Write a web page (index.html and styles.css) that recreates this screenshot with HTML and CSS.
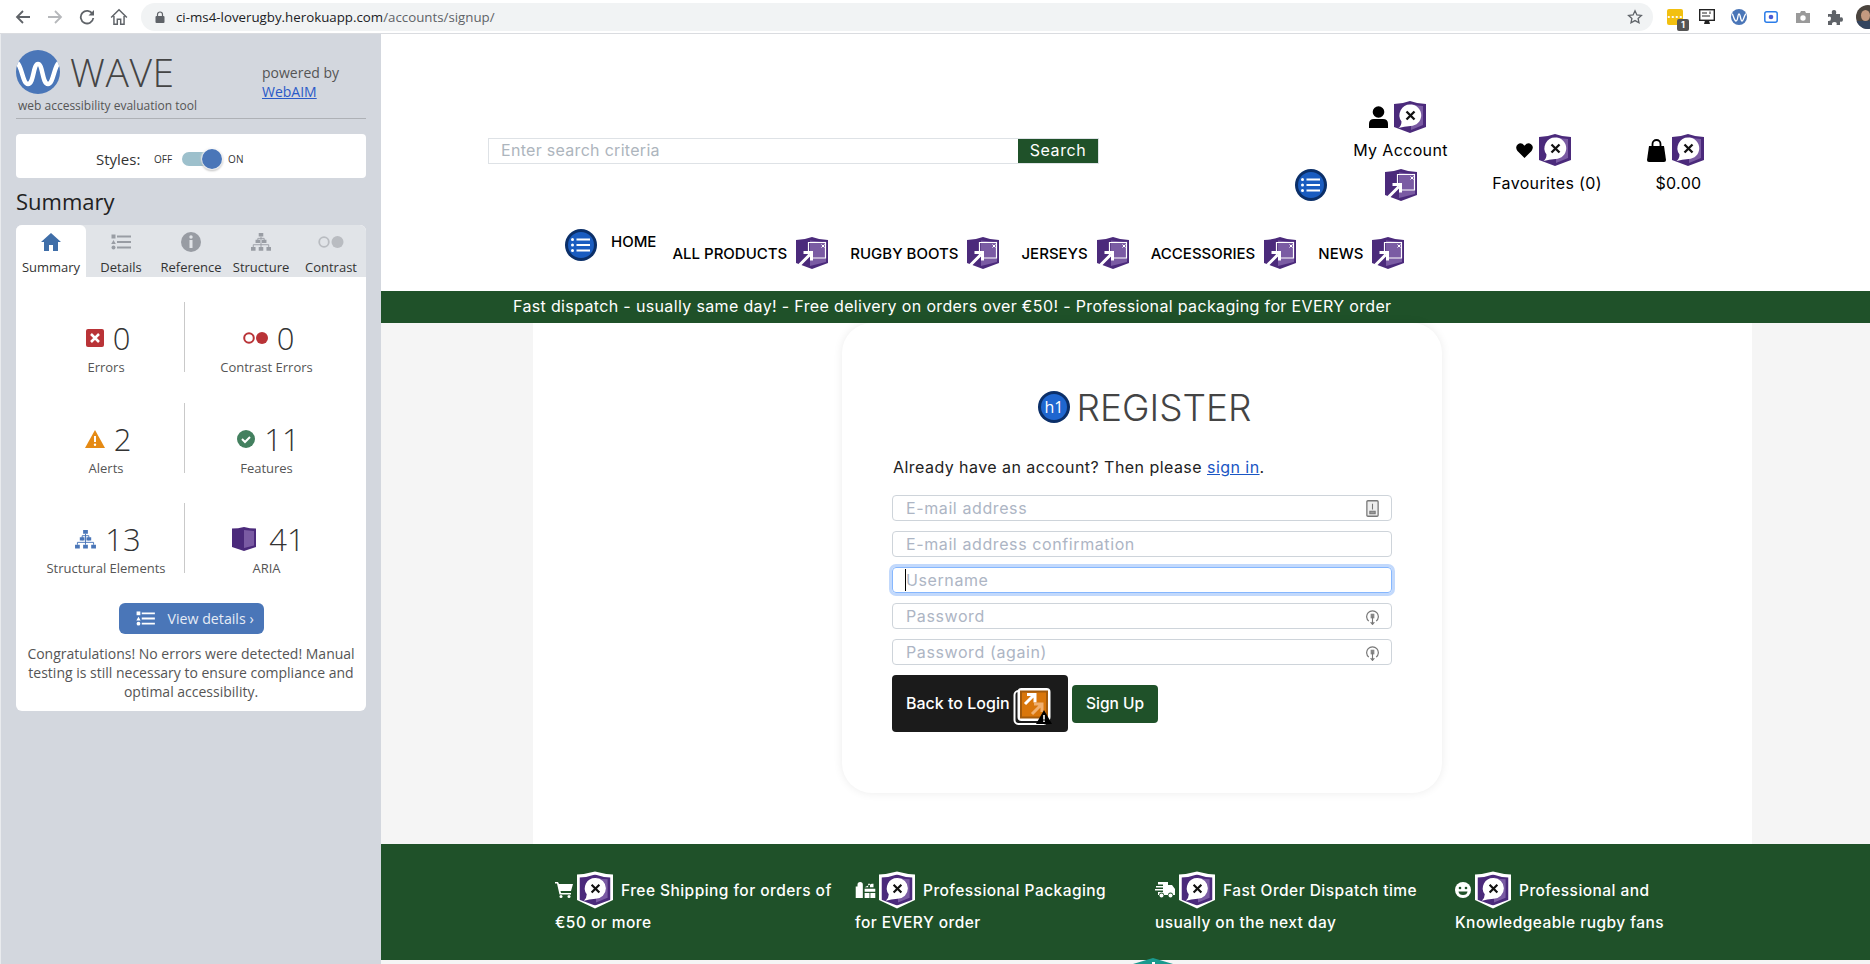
FILE: index.html
```html
<!DOCTYPE html>
<html>
	<head>
		<meta charset="utf-8"/>
		<title>Register - WAVE</title>
		<link rel="stylesheet" href="styles.css">
	</head>
	<body>
		<svg class="defs" width="0" height="0">
			<symbol id="aria-x" viewBox="0 0 32 32">
				<path d="M16 0Q24 3 32 3V26L16 32 0 26V3Q8 3 16 0Z" fill="#4b2a7b"/>
				<path d="M17 3Q24 5 29 5V24L17 29Z" fill="#7a5ba3"/>
				<path d="M16.500 3.500A10.700 10.700 0 0 1 16.500 25Q10 25.500 4.500 27Q7.500 24.500 7.500 20.500A10.700 10.700 0 0 1 16.500 3.500Z" fill="#fff"/>
				<path d="M12.500 10.500l8 8M20.500 10.500l-8 8" stroke="#111" stroke-width="2.300"/>
			</symbol>
			<symbol id="aria-x-line" viewBox="0 0 38 38">
				<path d="M19 0.500Q28 3 37 3.500V29L19 37.500 1 29V3.500Q10 3 19 0.500Z" fill="#fff"/>
				<use href="#aria-x" x="3.500" y="3.500" width="31" height="31"/>
			</symbol>
			<symbol id="aria-link" viewBox="0 0 32 32">
				<path d="M16 0Q24 3 32 3V26L16 32 0 26V3Q8 3 16 0Z" fill="#4b2a7b"/>
				<path d="M14 3.500Q24 5 30 4.500V25L14 29Z" fill="#7a5ba3"/>
				<path d="M12.500 18V5.500H29.500V21H14" fill="none" stroke="#fff" stroke-width="1.200"/>
				<path d="M25.500 7.500l3 3M28.500 7.500l-3 3" stroke="#fff" stroke-width="1"/>
				<path d="M3.500 28L14 17.500M7.500 15.500H15.500V23.500" fill="none" stroke="#fff" stroke-width="3"/>
			</symbol>
			<symbol id="list-blue" viewBox="0 0 32 32">
				<circle cx="16" cy="16" r="16" fill="#0b2f69"/>
				<circle cx="16" cy="16" r="13" fill="#1a5cc0"/>
				<path d="M11.500 10.500H25M11.500 16H25M11.500 21.500H25" stroke="#fff" stroke-width="2.200"/>
				<circle cx="7.500" cy="10.500" r="1.500" fill="#fff"/>
				<circle cx="7.500" cy="16" r="1.500" fill="#fff"/>
				<circle cx="7.500" cy="21.500" r="1.500" fill="#fff"/>
			</symbol>
			<symbol id="list-plain" viewBox="0 0 20 16">
				<path d="M6 2.500H20M6 8H20M6 13.500H20" stroke="currentColor" stroke-width="2"/>
				<rect x="0.500" y="0.500" width="4" height="4" fill="currentColor"/>
				<path d="M2.500 6L4.800 10H0.200Z" fill="currentColor"/>
				<circle cx="2.500" cy="13.500" r="2" fill="currentColor"/>
			</symbol>
			<symbol id="tree" viewBox="0 0 22 20">
				<path d="M8.500 0H13.500V4H8.500ZM5 7.500H10V11H5ZM12 7.500H17V11H12ZM0 15.500H5V19.500H0ZM8.500 15.500H13.500V19.500H8.500ZM17 15.500H22V19.500H17Z" fill="currentColor"/>
				<path d="M11 4V15.500M7.500 11V6H14.500V11M2.500 15.500V13H19.500V15.500" fill="none" stroke="currentColor"/>
			</symbol>
			<symbol id="key" viewBox="0 0 14 18">
				<path d="M3 14A6.300 6.300 0 1 1 11 14" fill="none" stroke="#777" stroke-width="1.300"/>
				<rect x="5" y="6" width="4" height="5" fill="#888"/>
				<path d="M7 9V17M5 15l2 2.500 2-2.500" fill="none" stroke="#777" stroke-width="1.200"/>
			</symbol>
		</svg>

		<!-- browser bar -->
		<div class="toolbar">
			<svg class="tool-icon first" viewBox="0 0 16 16"><path d="M15 8H2M8 2L2 8l6 6" fill="none" stroke="#5f6368" stroke-width="1.800"/></svg>
			<svg class="tool-icon" viewBox="0 0 16 16"><path d="M1 8H14M8 2l6 6-6 6" fill="none" stroke="#b6b8bb" stroke-width="1.800"/></svg>
			<svg class="tool-icon" viewBox="0 0 16 16"><path d="M13.500 5A6.300 6.300 0 1 0 14.300 9" fill="none" stroke="#5f6368" stroke-width="1.800"/><path d="M15 1V6.500H9.500Z" fill="#5f6368"/></svg>
			<svg class="tool-icon tool-home" viewBox="0 0 16 16"><path d="M1 8.500L8 1.500l7 7M3.500 7V14.500H6.500V10H9.500V14.500H12.500V7" fill="none" stroke="#5f6368" stroke-width="1.300"/></svg>
			<div class="omnibox">
				<svg class="lock" viewBox="0 0 10 12"><path d="M2.500 5V3.500a2.500 2.500 0 0 1 5 0V5" fill="none" stroke="#5f6368" stroke-width="1.200"/><rect x="0.500" y="5" width="9" height="7" rx="1" fill="#5f6368"/></svg>
				<span class="url">ci-ms4-loverugby.herokuapp.com<span class="url-path">/accounts/signup/</span></span>
				<svg class="star" viewBox="0 0 16 16"><path d="M8 1.800l1.900 4.100 4.500.5-3.300 3 .9 4.400L8 11.600l-4 2.200.9-4.400-3.300-3 4.500-.5Z" fill="none" stroke="#5f6368" stroke-width="1.300"/></svg>
			</div>
			<div class="exts">
				<div class="ext-yellow"><span class="ext-dots">....</span><span class="ext-badge">1</span></div>
				<svg class="ext ext-monitor" viewBox="0 0 16 16"><rect x="0.700" y="0.700" width="14.600" height="10.600" fill="#fff" stroke="#222" stroke-width="1.400"/><path d="M3 4H8M3 7H11M11 2.500V5" stroke="#222"/><path d="M6 11.500H10L11 15H5Z" fill="#222"/></svg>
				<svg class="ext ext-wave" viewBox="0 0 16 16"><circle cx="8" cy="8" r="8" fill="#4a76b8"/><path d="M1 5C2.500 5 2.800 12 5 12S6.500 5 8 5 9.500 12 11 12 13.500 5 15 5" fill="none" stroke="#fff" stroke-width="1.300"/></svg>
				<svg class="ext ext-rec" viewBox="0 0 14 12"><rect x="0.800" y="0.800" width="12.400" height="10.400" rx="2" fill="#fff" stroke="#2b7de9" stroke-width="1.500"/><circle cx="7" cy="6" r="2.300" fill="#4a5bd4"/></svg>
				<svg class="ext ext-cam" viewBox="0 0 14 14"><path d="M0 3H4L5 1H9L10 3H14V13H0Z" fill="#9a9a9a"/><circle cx="7" cy="8" r="2.700" fill="#fff"/></svg>
				<svg class="ext ext-puzzle" viewBox="0 0 16 16"><path d="M1 5H5Q4 1 7 1T9 5H13V8.500Q16 7.500 16 10.500T13 12.500V16H9.500Q10.500 13 7.500 13T5 16H1V12Q4 12.500 4 9.500T1 8Z" fill="#5f6368"/></svg>
				<div class="avatar"><div class="avatar-face"></div><div class="avatar-suit"></div></div>
			</div>
		</div>

		<div class="app">
			<!-- wave panel -->
			<div class="wave">
				<div class="wave-head">
					<div class="wave-brand">
						<div class="wave-logo">
							<svg class="wave-mark" viewBox="0 0 44 44"><defs><clipPath id="mark-clip"><circle cx="22" cy="22" r="22"/></clipPath></defs><circle cx="22" cy="22" r="22" fill="#4a76b8"/><path clip-path="url(#mark-clip)" d="M-1 12C6 12 6 34 12 34S17 14 22 14 26 34 32 34 38 12 45 12" fill="none" stroke="#fff" stroke-width="4.500"/></svg>
							<span class="wave-name">WAVE</span>
						</div>
						<div class="wave-tag">web accessibility evaluation tool</div>
					</div>
					<div class="wave-by">powered by<br><a href="#">WebAIM</a></div>
				</div>

				<div class="styles-card">
					<span class="styles-label">Styles:</span>
					<span class="styles-off">OFF</span>
					<span class="switch"><span class="switch-knob"></span></span>
					<span class="styles-on">ON</span>
				</div>

				<h2 class="wave-title">Summary</h2>

				<div class="panel">
					<div class="tabs">
						<div class="tab current">
							<svg class="tab-icon" viewBox="0 0 20 18"><path d="M10 0L20 9H17V18H12V12H8V18H3V9H0Z" fill="#3f6ea8"/></svg>
							Summary
						</div>
						<div class="tab">
							<svg class="tab-icon"><use href="#list-plain"/></svg>
							Details
						</div>
						<div class="tab">
							<svg class="tab-icon" viewBox="0 0 20 20"><circle cx="10" cy="10" r="10" fill="#989ca3"/><rect x="8.500" y="8" width="3" height="8" fill="#e1e4e8"/><circle cx="10" cy="5" r="1.700" fill="#e1e4e8"/></svg>
							Reference
						</div>
						<div class="tab">
							<svg class="tab-icon"><use href="#tree"/></svg>
							Structure
						</div>
						<div class="tab">
							<svg class="tab-icon tab-icon-wide" viewBox="0 0 26 12"><circle cx="6" cy="6" r="4.800" fill="none" stroke="#b9bcc1" stroke-width="1.800"/><circle cx="19.500" cy="6" r="6" fill="#b9bcc1"/></svg>
							Contrast
						</div>
					</div>

					<div class="stats">
						<div class="stat stat-left">
							<div class="stat-top">
								<svg class="stat-icon" viewBox="0 0 18 18"><rect width="18" height="18" rx="2" fill="#b93337"/><path d="M5 5l8 8M13 5l-8 8" stroke="#fff" stroke-width="2.500"/></svg>
								<span class="stat-num">0</span>
							</div>
							<div class="stat-name">Errors</div>
						</div>
						<div class="stat">
							<div class="stat-top">
								<svg class="stat-icon stat-icon-wide" viewBox="0 0 25 12"><circle cx="6" cy="6" r="4.800" fill="none" stroke="#b93337" stroke-width="2"/><circle cx="19" cy="6" r="6" fill="#b93337"/></svg>
								<span class="stat-num">0</span>
							</div>
							<div class="stat-name">Contrast Errors</div>
						</div>
						<div class="stat stat-left">
							<div class="stat-top">
								<svg class="stat-icon stat-icon-alert" viewBox="0 0 20 18"><path d="M10 0L20 18H0Z" fill="#e58a14"/><path d="M10 6V12" stroke="#fff" stroke-width="2"/><circle cx="10" cy="14.700" r="1.200" fill="#fff"/></svg>
								<span class="stat-num">2</span>
							</div>
							<div class="stat-name">Alerts</div>
						</div>
						<div class="stat">
							<div class="stat-top">
								<svg class="stat-icon" viewBox="0 0 18 18"><circle cx="9" cy="9" r="9" fill="#43805f"/><path d="M5 9l3 3 5-5" fill="none" stroke="#fff" stroke-width="2"/></svg>
								<span class="stat-num">11</span>
							</div>
							<div class="stat-name">Features</div>
						</div>
						<div class="stat stat-left">
							<div class="stat-top">
								<svg class="stat-icon stat-icon-tree"><use href="#tree"/></svg>
								<span class="stat-num">13</span>
							</div>
							<div class="stat-name">Structural Elements</div>
						</div>
						<div class="stat">
							<div class="stat-top">
								<svg class="stat-icon stat-icon-aria" viewBox="0 0 24 24"><path d="M12 0Q18 1.500 24 1.500V20L12 24 0 20V1.500Q6 1.500 12 0Z" fill="#4b2a7b"/><path d="M12 3L22 4V18.500L12 21Z" fill="#7a5ba3"/></svg>
								<span class="stat-num">41</span>
							</div>
							<div class="stat-name">ARIA</div>
						</div>
					</div>

					<div class="details-btn">
						<svg class="details-icon"><use href="#list-plain"/></svg>
						View details ›
					</div>
					<p class="panel-note">Congratulations! No errors were detected! Manual testing is still necessary to ensure compliance and optimal accessibility.</p>
				</div>
			</div>

			<!-- the page being checked -->
			<div class="site">
				<div class="head-top">
					<div class="search">
						<span class="search-text">Enter search criteria</span>
						<span class="search-btn">Search</span>
					</div>
					<svg class="icon32 head-list"><use href="#list-blue"/></svg>
					<div class="head-col col-account">
						<div class="head-icons">
							<svg class="glyph-person" viewBox="0 0 19 22"><circle cx="9.500" cy="6" r="5.800" fill="#000"/><path d="M0 22V18Q0 13 5 13H14Q19 13 19 18V22Z" fill="#000"/></svg>
							<svg class="icon32"><use href="#aria-x"/></svg>
						</div>
						<div class="head-label">My Account</div>
						<svg class="icon32 account-link"><use href="#aria-link"/></svg>
					</div>
					<div class="head-col col-fav">
						<div class="head-icons">
							<svg class="glyph-heart" viewBox="0 0 18 16"><path d="M9 16L1.500 8.500Q-1.500 4 2 1.300T9 2.800Q12.500-1.200 16 1.300T16.500 8.500Z" fill="#000"/></svg>
							<svg class="icon32"><use href="#aria-x"/></svg>
						</div>
						<div class="head-label">Favourites (0)</div>
					</div>
					<div class="head-col col-cart">
						<div class="head-icons">
							<svg class="glyph-bag" viewBox="0 0 19 23"><path d="M5.500 8V5a4 4 0 0 1 8 0V8" fill="none" stroke="#000" stroke-width="1.800"/><path d="M2 7H17L19 21Q19 23 17 23H2Q0 23 0 21Z" fill="#000"/></svg>
							<svg class="icon32"><use href="#aria-x"/></svg>
						</div>
						<div class="head-label cart-label">$0.00</div>
					</div>
				</div>

				<div class="nav">
					<svg class="icon32 nav-list"><use href="#list-blue"/></svg>
					<a class="nav-home">HOME</a>
					<a class="nav-link">ALL PRODUCTS <svg class="icon32"><use href="#aria-link"/></svg></a>
					<a class="nav-link">RUGBY BOOTS <svg class="icon32"><use href="#aria-link"/></svg></a>
					<a class="nav-link">JERSEYS <svg class="icon32"><use href="#aria-link"/></svg></a>
					<a class="nav-link">ACCESSORIES <svg class="icon32"><use href="#aria-link"/></svg></a>
					<a class="nav-link">NEWS <svg class="icon32"><use href="#aria-link"/></svg></a>
				</div>

				<div class="banner">Fast dispatch - usually same day! - Free delivery on orders over €50! - Professional packaging for EVERY order</div>

				<div class="content">
					<div class="sheet">
						<div class="card">
							<h1 class="card-title">
								<svg class="icon32" viewBox="0 0 32 32"><circle cx="16" cy="16" r="16" fill="#0b2f69"/><circle cx="16" cy="16" r="13" fill="#1f66cf"/><text x="16" y="21.500" text-anchor="middle" class="h1-tag">h1</text></svg>
								REGISTER
							</h1>
							<p class="card-text">Already have an account? Then please <a href="#">sign in</a>.</p>
							<div class="field">
								<span class="hint">E-mail address</span>
								<svg class="field-icon" viewBox="0 0 12 16"><rect x="0.700" y="0.700" width="10.600" height="14.600" rx="1" fill="#eee" stroke="#777" stroke-width="1.200"/><path d="M6 3.500V9M3.500 10.500H8.500V13H3.500Z" stroke="#777" fill="#999"/></svg>
							</div>
							<div class="field"><span class="hint">E-mail address confirmation</span></div>
							<div class="field focus"><span class="caret"></span><span class="hint">Username</span></div>
							<div class="field">
								<span class="hint">Password</span>
								<svg class="field-icon"><use href="#key"/></svg>
							</div>
							<div class="field">
								<span class="hint">Password (again)</span>
								<svg class="field-icon"><use href="#key"/></svg>
							</div>
							<div class="actions">
								<div class="btn-back">
									Back to Login
									<svg class="alert-link" viewBox="0 0 39 38">
										<rect x="1.500" y="4" width="33" height="33" rx="4" fill="#1b1b1b" stroke="#fff" stroke-width="2"/>
										<rect x="4.500" y="1" width="33" height="33" rx="4" fill="#fff"/>
										<rect x="7" y="3.500" width="28" height="28" fill="#a35a0b"/>
										<rect x="9" y="5.500" width="24" height="24" fill="#d9760a"/>
										<path d="M12 17L21 8M14 7.500H22V15.500" fill="none" stroke="#fff" stroke-width="3"/>
										<path d="M19 27L28 18M21 17H29V25" fill="none" stroke="#f0b070" stroke-width="3"/>
										<path d="M31 23L39 37H23Z" fill="#000"/>
										<path d="M31 28V32.500M31 33.500V35" stroke="#fff" stroke-width="1.600"/>
									</svg>
								</div>
								<div class="btn-sign">Sign Up</div>
							</div>
						</div>
					</div>
				</div>

				<div class="features">
					<div class="feature">
						<div class="feature-top">
							<svg class="feature-glyph" viewBox="0 0 18 16"><path d="M0 0H3L4 2H18L16 9H5.500L6 11H16V12.500H4.500L2 1.500H0Z" fill="#fff"/><circle cx="6" cy="14.500" r="1.500" fill="#fff"/><circle cx="14" cy="14.500" r="1.500" fill="#fff"/></svg>
							<svg class="feature-shield"><use href="#aria-x-line"/></svg>
							<span>Free Shipping for orders of</span>
						</div>
						<div class="feature-more">€50 or more</div>
					</div>
					<div class="feature">
						<div class="feature-top">
							<svg class="feature-glyph feature-gift" viewBox="0 0 22 18"><path d="M2 3Q2 0 5 0T8 3V18H0V5H2ZM10 6H14V2H16V6H20V2H18M10 7.500H22V11H10ZM10 12.500H15.500V18H10ZM16.500 12.500H22V18H16.500Z" fill="#fff"/></svg>
							<svg class="feature-shield"><use href="#aria-x-line"/></svg>
							<span>Professional Packaging</span>
						</div>
						<div class="feature-more">for EVERY order</div>
					</div>
					<div class="feature">
						<div class="feature-top">
							<svg class="feature-glyph feature-truck" viewBox="0 0 20 16"><path d="M3 0H13V3H17L20 7V13H18A2.500 2.500 0 0 0 13 13H9A2.500 2.500 0 0 0 4 13H3V10H8V8.500H0V7H8V5.500H1V4H8V2.500H3Z" fill="#fff"/><circle cx="6.500" cy="13.500" r="2" fill="#fff"/><circle cx="15.500" cy="13.500" r="2" fill="#fff"/></svg>
							<svg class="feature-shield"><use href="#aria-x-line"/></svg>
							<span>Fast Order Dispatch time</span>
						</div>
						<div class="feature-more">usually on the next day</div>
					</div>
					<div class="feature">
						<div class="feature-top">
							<svg class="feature-glyph feature-smile" viewBox="0 0 16 16"><circle cx="8" cy="8" r="8" fill="#fff"/><circle cx="5" cy="6" r="1.300" fill="#1f5129"/><circle cx="11" cy="6" r="1.300" fill="#1f5129"/><path d="M3.500 9.500H12.500Q12 13 8 13T3.500 9.500Z" fill="#1f5129"/></svg>
							<svg class="feature-shield"><use href="#aria-x-line"/></svg>
							<span>Professional and</span>
						</div>
						<div class="feature-more">Knowledgeable rugby fans</div>
					</div>
					<svg class="to-top" viewBox="0 0 40 6"><path d="M0 6L20 0 40 6Z" fill="#1a9a8f"/><rect x="19" y="4" width="3" height="2" fill="#fff"/></svg>
				</div>
				<div class="foot-strip"></div>
			</div>
		</div>
	</body>
</html>
```

FILE: styles.css
```css
/*reset*/
* {
	margin: 0;
	padding: 0;
	box-sizing: border-box;
}

body {
	width: 1870px;
	height: 964px;
	overflow: hidden;
	background-color: #fff;
	font-family: "Inter", "Liberation Sans", sans-serif;
	color: #000;
}

.defs {
	position: absolute;
}

/*browser bar*/
.toolbar {
	height: 34px;
	display: flex;
	align-items: center;
	border-bottom: 1px solid #dadce0;
	background-color: #fff;
}

.tool-icon {
	width: 16px;
	height: 16px;
	margin-right: 16px;
}

.tool-home {
	width: 18px;
	height: 18px;
	margin: 0 15px 0 -1px;
}

.first {
	margin-left: 15px;
}

.omnibox {
	width: 1512px;
	height: 28px;
	margin-left: -2px;
	padding: 0 10px 0 14px;
	display: flex;
	align-items: center;
	border-radius: 14px;
	background-color: #f1f3f4;
}

.lock {
	width: 10px;
	height: 12px;
	margin-right: 11px;
}

.url {
	flex: 1;
	font-family: "Open Sans", sans-serif;
	font-size: 13.300px;
	color: #202124;
}

.url-path {
	color: #5f6368;
}

.star {
	width: 16px;
	height: 16px;
}

.exts {
	display: flex;
	align-items: center;
	flex: 1;
	overflow: hidden;
	height: 33px;
}

.ext-yellow {
	width: 16px;
	height: 16px;
	margin-left: 14px;
	position: relative;
	border-radius: 2px;
	background-color: #f2c010;
}

.ext-dots {
	display: block;
	font-size: 12px;
	line-height: 10px;
	font-weight: 700;
	color: #fff;
	text-align: center;
}

.ext-badge {
	position: absolute;
	left: 10px;
	top: 10px;
	width: 12px;
	height: 12px;
	border-radius: 2px;
	background-color: #555;
	font-size: 9px;
	line-height: 12px;
	font-weight: 700;
	color: #fff;
	text-align: center;
}

.ext {
	width: 16px;
	height: 16px;
	flex-shrink: 0;
}

.ext-monitor {
	margin-left: 16px;
}

.ext-wave {
	margin-left: 16px;
}

.ext-rec {
	width: 14px;
	height: 12px;
	margin-left: 17px;
}

.ext-cam {
	width: 14px;
	height: 14px;
	margin-left: 18px;
}

.ext-puzzle {
	margin-left: 17px;
}

.avatar {
	width: 24px;
	height: 24px;
	margin-left: 13px;
	flex-shrink: 0;
	position: relative;
	overflow: hidden;
	border-radius: 50%;
	background-color: #4b443e;
}

.avatar-face {
	position: absolute;
	left: 5px;
	top: 5px;
	width: 9px;
	height: 11px;
	border-radius: 50%;
	background-color: #c49a80;
}

.avatar-suit {
	position: absolute;
	left: 0;
	top: 16px;
	width: 24px;
	height: 8px;
	background-color: #33445e;
}

.app {
	display: flex;
	height: 930px;
}

/*wave panel*/
.wave {
	width: 381px;
	flex-shrink: 0;
	padding: 16px 15px 0 15px;
	border-left: 1px solid #e9ebee;
	background-color: #d3d7de;
	font-family: "Open Sans", sans-serif;
	color: #333;
}

.wave-head {
	display: flex;
	padding-bottom: 4px;
	border-bottom: 1px solid #aeb1b6;
}

.wave-brand {
	width: 246px;
}

.wave-logo {
	display: flex;
	height: 44px;
	align-items: center;
}

.wave-mark {
	width: 44px;
	height: 44px;
}

.wave-name {
	margin-left: 10px;
	font-size: 39px;
	font-weight: 300;
	line-height: 44px;
	letter-spacing: 0.6px;
	color: #444;
}

.wave-tag {
	margin: 4px 0 0 2px;
	font-size: 12px;
	line-height: 16px;
	color: #555;
	white-space: nowrap;
}

.wave-by {
	padding-top: 13px;
	font-size: 14px;
	line-height: 19px;
	color: #555;
}

.wave-by a {
	color: #2a5ac8;
}

.styles-card {
	height: 44px;
	margin-top: 15px;
	padding: 6px 0 0 80px;
	display: flex;
	align-items: center;
	border-radius: 4px;
	background-color: #fff;
}

.styles-label {
	width: 58px;
	font-size: 15px;
}

.styles-off,
.styles-on {
	font-size: 10px;
}

.switch {
	width: 32px;
	height: 14px;
	margin: 0 6px 0 10px;
	position: relative;
	border-radius: 7px;
	background-color: #9dc0cc;
}

.switch-knob {
	position: absolute;
	right: -8px;
	top: -3px;
	width: 20px;
	height: 20px;
	border: 0;
	border-radius: 50%;
	background-color: #4a76b8;
	box-shadow: 0 0 2px 1px #fff, 0 1px 2px 1px rgba(0, 0, 0, .3);
}

.styles-on {
	margin-left: 8px;
}

.wave-title {
	margin: 8px 0 9px;
	font-size: 22px;
	font-weight: 400;
	line-height: 30px;
	color: #222;
}

.panel {
	height: 486px;
	border-radius: 6px;
	background-color: #fff;
}

.tabs {
	display: flex;
	height: 52px;
	border-radius: 6px 6px 0 0;
	background-color: #e1e4e8;
}

.tab {
	width: 70px;
	padding-top: 7px;
	font-size: 13px;
	line-height: 16px;
	text-align: center;
	color: #333;
	white-space: nowrap;
}

.tab.current {
	border-radius: 6px 6px 0 0;
	background-color: #fff;
}

.tab-icon {
	display: block;
	width: 20px;
	height: 20px;
	margin: 0 auto 7px;
	color: #999da4;
}

.tab-icon-wide {
	width: 26px;
}

.stats {
	margin: 25px 0 0 12px;
	display: grid;
	grid-template-columns: 157px 163px;
	grid-auto-rows: 70px;
	row-gap: 30.500px;
}

.stat {
	padding-top: 18px;
	text-align: center;
}

.stat-left {
	border-right: 1px solid #c9c9c9;
}

.stat-top {
	display: flex;
	height: 36px;
	padding-left: 4px;
	align-items: center;
	justify-content: center;
	gap: 9px;
}

.stat-icon {
	width: 18px;
	height: 18px;
}

.stat-icon-wide {
	width: 25px;
	height: 12px;
}

.stat-icon-alert {
	width: 20px;
}

.stat-icon-tree {
	width: 21px;
	height: 19px;
	color: #4a76b8;
}

.stat-icon-aria {
	width: 24px;
	height: 24px;
	margin-right: 4px;
}

.stat-num {
	font-size: 31px;
	font-weight: 300;
	line-height: 36px;
	color: #333;
}

.stat-name {
	margin-top: 3px;
	font-size: 13px;
	line-height: 16px;
	color: #555;
}

.details-btn {
	width: 145px;
	height: 31px;
	margin: 30px auto 0;
	padding-left: 17px;
	display: flex;
	align-items: center;
	border-radius: 6px;
	background-color: #4a76b8;
	font-size: 14.200px;
	color: #e6ecf6;
}

.details-icon {
	width: 19px;
	height: 15px;
	margin-right: 13px;
	color: #fff;
}

.panel-note {
	margin-top: 10px;
	padding: 0 8px;
	font-size: 14px;
	line-height: 19px;
	text-align: center;
	color: #555;
}

/*site*/
.site {
	flex: 1;
	display: flex;
	flex-direction: column;
}

.head-top {
	height: 195px;
	padding-left: 107px;
	display: flex;
	align-items: flex-start;
}

.search {
	width: 611px;
	height: 26px;
	margin-top: 104px;
	display: flex;
	align-items: stretch;
	border: 1px solid #dee2e6;
}

.search-text {
	flex: 1;
	padding-left: 12px;
	font-size: 16px;
	line-height: 23px;
	letter-spacing: .3px;
	color: #adb5bd;
}

.search-btn {
	width: 80px;
	background-color: #1f5129;
	font-size: 16px;
	line-height: 23px;
	letter-spacing: .6px;
	color: #fff;
	text-align: center;
}

.icon32 {
	width: 32px;
	height: 32px;
	flex-shrink: 0;
}

.head-list {
	margin: 135px 0 0 196px;
}

.head-col {
	display: flex;
	flex-direction: column;
	align-items: center;
	white-space: nowrap;
}

.col-account {
	width: 93px;
	margin: 67px 0 0 27px;
}

.col-account .head-icons {
	margin-right: 6px;
}

.col-fav {
	width: 110px;
	margin: 100px 0 0 45px;
}

.col-fav .head-icons {
	margin-right: 8px;
}

.col-cart {
	width: 57px;
	margin: 100px 0 0 45px;
}

.head-icons {
	display: flex;
	align-items: center;
	gap: 6px;
}

.head-label {
	margin-top: 6px;
	font-size: 16px;
	line-height: 22px;
	letter-spacing: .35px;
}

.cart-label {
	padding-left: 6px;
}

.account-link {
	margin-top: 8px;
}

.glyph-person {
	width: 19px;
	height: 22px;
}

.glyph-heart {
	width: 17px;
	height: 15px;
}

.glyph-bag {
	width: 19px;
	height: 23px;
}

.nav {
	height: 62px;
	padding-left: 184px;
	display: flex;
	align-items: flex-start;
}

.nav-home {
	margin: 4px 16px 0 14px;
	font-size: 15px;
	font-weight: 500;
	line-height: 18px;
}

.nav-link {
	margin: 8px 22px 0 0;
	display: flex;
	align-items: center;
	gap: 9px;
	font-size: 15px;
	font-weight: 500;
}

.banner {
	height: 32px;
	padding-left: 132px;
	background-color: #1f5129;
	font-size: 16px;
	line-height: 31px;
	letter-spacing: .35px;
	color: #fff;
	white-space: nowrap;
}

.content {
	height: 521px;
	background-color: #f5f5f5;
}

.sheet {
	height: 521px;
	margin: 0 118px 0 152px;
	padding-left: 309px;
	background-color: #fff;
}

.card {
	width: 600px;
	height: 470px;
	padding: 68px 50px 0;
	border-radius: 30px;
	background-color: #fff;
	box-shadow: 0 0 10px rgba(0, 0, 0, .08);
}

.card-title {
	display: flex;
	align-items: center;
	justify-content: center;
	gap: 6px;
	margin-left: 6px;
	height: 32px;
	font-size: 37px;
	font-weight: 300;
	color: #444;
}

.h1-tag {
	font-family: "Open Sans", sans-serif;
	font-size: 16px;
	font-weight: 400;
	fill: #fff;
}

.card-text {
	margin: 32px 0 16px 1px;
	font-size: 16px;
	line-height: 24px;
	letter-spacing: .45px;
	color: #222;
}

.card-text a {
	color: #1a56c4;
}

.field {
	height: 26px;
	margin-bottom: 10px;
	padding: 0 12px 0 13px;
	display: flex;
	align-items: center;
	justify-content: space-between;
	position: relative;
	border: 1px solid #ced4da;
	border-radius: 4px;
}

.field.focus {
	justify-content: flex-start;
	border-color: #86b7fe;
	box-shadow: 0 0 0 3px #c2d9fc;
}

.hint {
	font-size: 16px;
	letter-spacing: .6px;
	color: #adb5c4;
}

.caret {
	position: absolute;
	left: 12px;
	top: 1px;
	width: 1px;
	height: 22px;
	background-color: #000;
}

.field-icon {
	width: 13px;
	height: 17px;
}

.actions {
	margin-top: 0;
	display: flex;
	align-items: flex-end;
	gap: 4px;
}

.btn-back {
	width: 176px;
	height: 57px;
	padding: 0 0 2px 14px;
	display: flex;
	align-items: center;
	border-radius: 4px;
	background-color: #1b1b1b;
	font-size: 16px;
	font-weight: 500;
	color: #fff;
	white-space: nowrap;
}

.alert-link {
	width: 39px;
	height: 38px;
	margin: 0 0 -6px 3px;
	flex-shrink: 0;
}

.btn-sign {
	width: 86px;
	height: 38px;
	margin-bottom: 9px;
	border-radius: 4px;
	background-color: #1f5129;
	font-size: 15.500px;
	font-weight: 500;
	line-height: 37px;
	text-align: center;
	color: #fff;
}

.features {
	height: 116px;
	padding: 27px 0 0 174px;
	display: flex;
	position: relative;
	background-color: #1f5129;
}

.feature {
	width: 300px;
	font-size: 15.500px;
	font-weight: 500;
	letter-spacing: .45px;
	color: #fff;
}

.feature-top {
	display: flex;
	height: 38px;
	align-items: center;
	white-space: nowrap;
}

.feature-glyph {
	width: 18px;
	height: 16px;
	margin-right: 3px;
	flex-shrink: 0;
}

.feature-gift {
	width: 21px;
	margin-right: 2px;
}

.feature-truck {
	width: 20px;
}

.feature-smile {
	width: 16px;
}

.feature-shield {
	width: 38px;
	height: 38px;
	margin-right: 7px;
	flex-shrink: 0;
}

.feature-more {
	margin-top: 3px;
	line-height: 22px;
}

.to-top {
	position: absolute;
	left: 752px;
	bottom: -4px;
	width: 40px;
	height: 6px;
}

.foot-strip {
	height: 4px;
	background-color: #f5f5f5;
}
```
